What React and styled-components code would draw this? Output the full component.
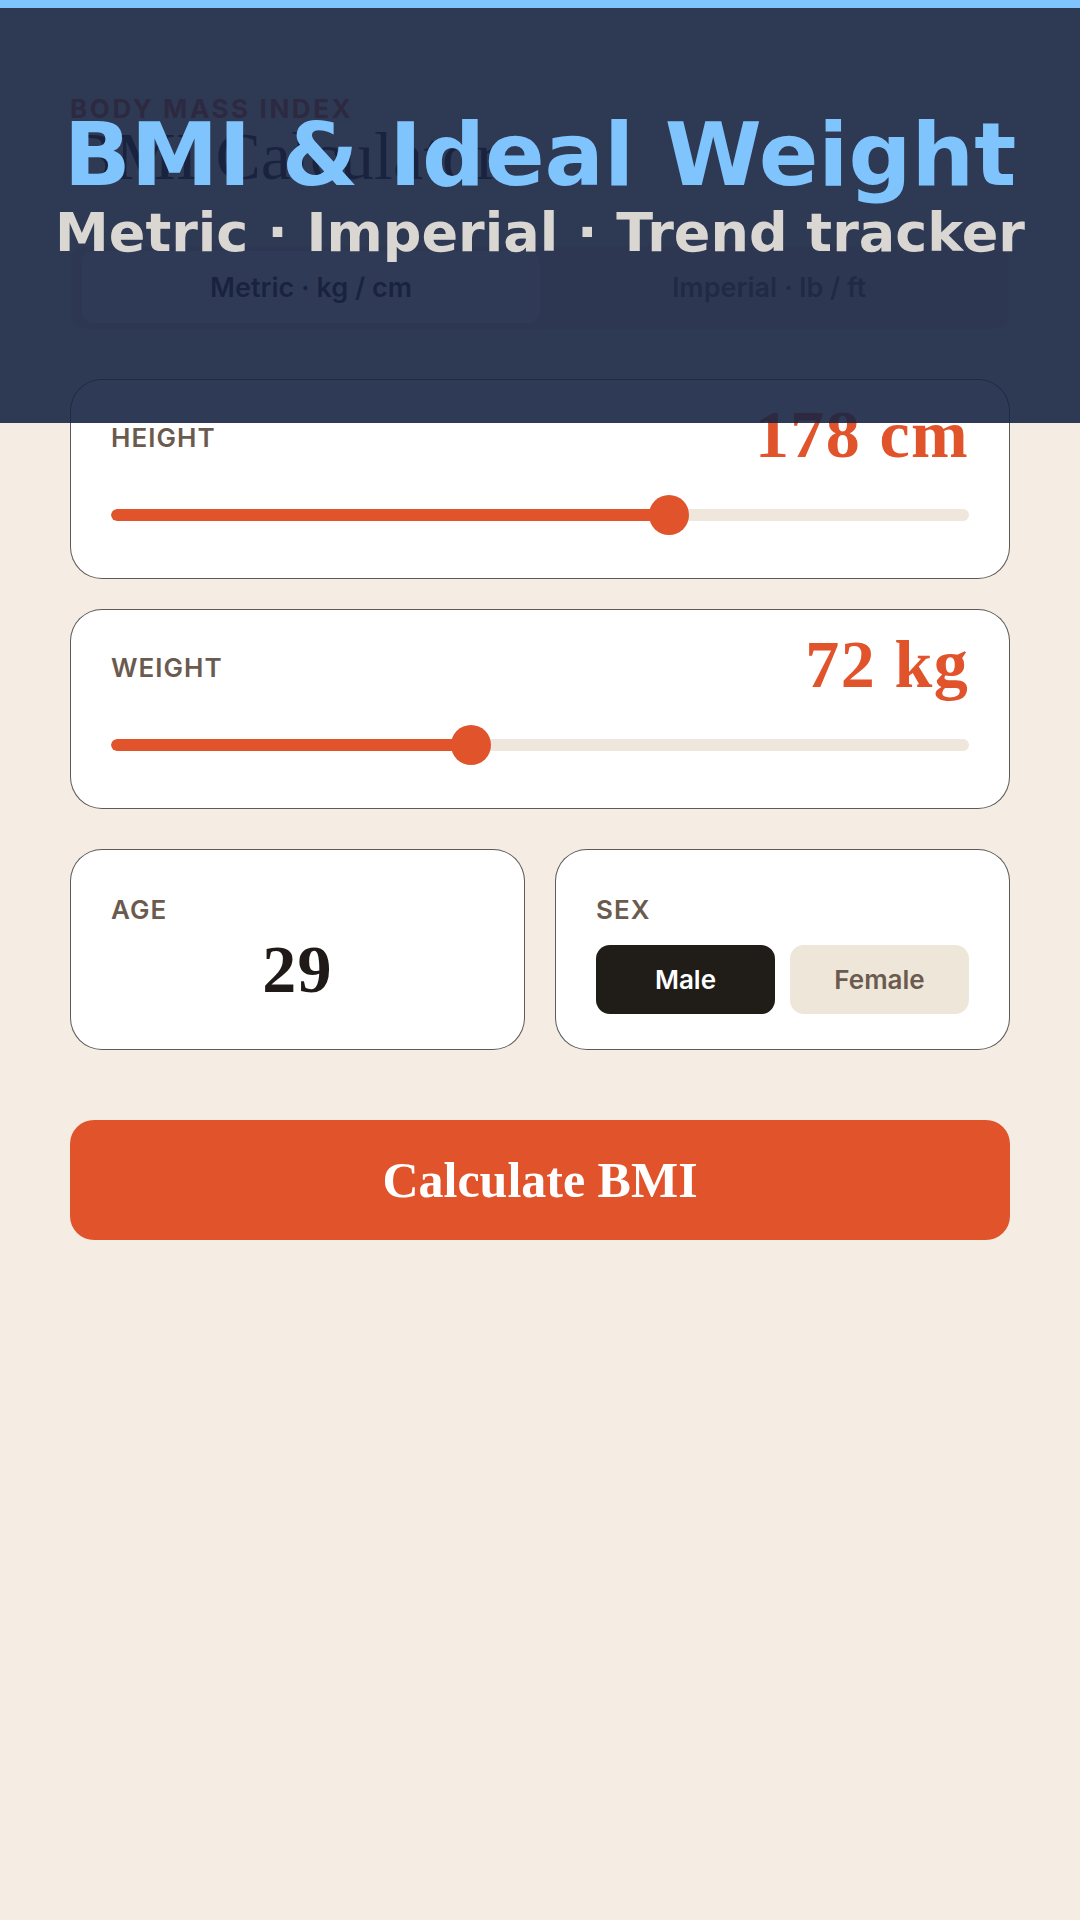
import React from 'react';
import styled, { createGlobalStyle } from 'styled-components';

const GlobalStyle = createGlobalStyle`
  html, body {
    margin: 0;
    padding: 0;
    background: #f5ede3;
  }
  body {
    font-family: Inter, "Noto Sans", sans-serif;
    -webkit-font-smoothing: antialiased;
  }
  * { box-sizing: border-box; }
`;

const Page = styled.div`
  position: relative;
  min-height: 1920px;
  background: #f5ede3;
  padding: 96px 70px 0;
`;

const Eyebrow = styled.div`
  font-family: Inter, "Noto Sans", sans-serif;
  font-weight: 700;
  font-size: 26px;
  line-height: 1;
  letter-spacing: 0.1em;
  color: #e0532b;
  text-transform: uppercase;
`;

const Heading = styled.h1`
  margin: 0;
  font-family: "Liberation Serif", "DejaVu Serif", serif;
  font-weight: 400;
  font-size: 68px;
  line-height: 1;
  color: #1f1a17;
`;

const Tabs = styled.div`
  margin-top: 56px;
  display: grid;
  grid-template-columns: 1fr 1fr;
  padding: 5px 12px 6px;
  height: 83px;
  border-radius: 16px;
  background: #ece2d5;
`;

const Tab = styled.div`
  display: flex;
  align-items: center;
  justify-content: center;
  border-radius: 12px;
  font-family: Inter, "Noto Sans", sans-serif;
  font-weight: 600;
  font-size: 27px;
  color: ${(p) => (p.$active ? '#1f1a17' : '#6b5a4e')};
  background: ${(p) => (p.$active ? '#ffffff' : 'transparent')};
`;

const Stack = styled.div`
  margin-top: 50px;
  display: flex;
  flex-direction: column;
  gap: 30px;
`;

const Card = styled.div`
  background: #ffffff;
  border: 1px solid rgba(31, 26, 23, 0.72);
  border-radius: 32px;
  padding: ${(p) => p.$pad || '44px 40px 35px'};
  display: flex;
  flex-direction: column;
`;

const Row = styled.div`
  display: flex;
  align-items: center;
  justify-content: space-between;
  height: 68px;
`;

const Label = styled.div`
  font-family: Inter, "Noto Sans", sans-serif;
  font-weight: 600;
  font-size: 26px;
  line-height: 1.2;
  letter-spacing: 0.04em;
  color: #6b5a4e;
  text-transform: uppercase;
  margin-top: ${(p) => p.$shift || '0'};
`;

const BigValue = styled.div`
  font-family: "Liberation Serif", "DejaVu Serif", serif;
  font-weight: 700;
  font-size: 68px;
  line-height: 1;
  letter-spacing: 0.02em;
  color: ${(p) => (p.$accent ? '#e0532b' : '#1f1a17')};
  text-align: ${(p) => (p.$center ? 'center' : 'right')};
  margin-top: ${(p) => p.$top || '0'};
`;

const SliderWrap = styled.div`
  position: relative;
  margin-top: 27px;
  height: 40px;
  display: flex;
  align-items: center;
`;

const Rail = styled.div`
  width: 100%;
  height: 12px;
  border-radius: 6px;
  background: #efe6dc;
  overflow: hidden;
`;

const Fill = styled.div`
  height: 100%;
  border-radius: 6px;
  background: #e0532b;
`;

const Thumb = styled.div`
  position: absolute;
  top: 0;
  width: 40px;
  height: 40px;
  margin-left: -20px;
  border-radius: 50%;
  background: #e0532b;
`;

const Pair = styled.div`
  margin-top: 40px;
  display: grid;
  grid-template-columns: 1fr 1fr;
  gap: 30px;
`;

const Toggle = styled.div`
  margin-top: 20px;
  display: grid;
  grid-template-columns: 1fr 1fr;
  gap: 15px;
`;

const ToggleButton = styled.div`
  height: 69px;
  border-radius: 14px;
  display: flex;
  align-items: center;
  justify-content: center;
  font-family: Inter, "Noto Sans", sans-serif;
  font-weight: 600;
  font-size: 26px;
  color: ${(p) => (p.$active ? '#ffffff' : '#6b5a4e')};
  background: ${(p) => (p.$active ? '#201c18' : '#efe6da')};
`;

const CTA = styled.button`
  margin-top: 70px;
  width: 100%;
  height: 120px;
  border: none;
  border-radius: 24px;
  background: #e0532b;
  color: #ffffff;
  font-family: "Liberation Serif", "DejaVu Serif", serif;
  font-weight: 700;
  font-size: 50px;
  cursor: pointer;
`;

const Banner = styled.div`
  position: absolute;
  top: 0;
  left: 0;
  right: 0;
  height: 423px;
  border-top: 8px solid #80c4fe;
  background: rgba(24, 37, 68, 0.9);
  padding-top: 103px;
  text-align: center;
  font-family: "DejaVu Sans", sans-serif;
  font-weight: 700;
`;

const BannerTitle = styled.div`
  font-size: 88px;
  line-height: 1;
  color: #80c4fe;
  white-space: nowrap;
`;

const BannerSub = styled.div`
  margin-top: 7px;
  font-size: 54px;
  line-height: 1;
  color: #dad7d3;
  white-space: nowrap;
`;

function Slider({ value, min, max }) {
  const pct = ((value - min) / (max - min)) * 100;
  return (
    <SliderWrap>
      <Rail>
        <Fill style={{ width: `${pct}%` }} />
      </Rail>
      <Thumb style={{ left: `${pct}%` }} />
    </SliderWrap>
  );
}

function MeasureCard({ label, value, unit, min, max }) {
  return (
    <Card $pad="20px 40px 43px">
      <Row>
        <Label $shift="8px">{label}</Label>
        <BigValue $accent>
          {value} {unit}
        </BigValue>
      </Row>
      <Slider value={value} min={min} max={max} />
    </Card>
  );
}

export default function App() {
  return (
    <>
      <GlobalStyle />
      <Page>
        <Eyebrow>Body Mass Index</Eyebrow>
        <Heading>BMI Calculator</Heading>
        <Tabs>
          <Tab $active>Metric · kg / cm</Tab>
          <Tab>Imperial · lb / ft</Tab>
        </Tabs>
        <Stack>
          <MeasureCard label="Height" value={178} unit="cm" min={100} max={220} />
          <MeasureCard label="Weight" value={72} unit="kg" min={30} max={130} />
        </Stack>
        <Pair>
          <Card>
            <Label>Age</Label>
            <BigValue $center $top="10px">29</BigValue>
          </Card>
          <Card>
            <Label>Sex</Label>
            <Toggle>
              <ToggleButton $active>Male</ToggleButton>
              <ToggleButton>Female</ToggleButton>
            </Toggle>
          </Card>
        </Pair>
        <CTA>Calculate BMI</CTA>
        <Banner>
          <BannerTitle>BMI &amp; Ideal Weight</BannerTitle>
          <BannerSub>Metric · Imperial · Trend tracker</BannerSub>
        </Banner>
      </Page>
    </>
  );
}
